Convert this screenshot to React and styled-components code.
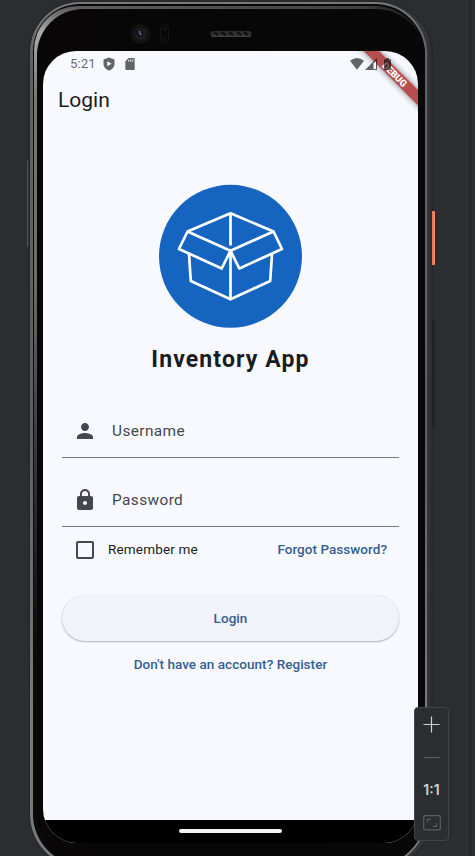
import React from "react";
import styled, { createGlobalStyle } from "styled-components";

const Global = createGlobalStyle`
  * { box-sizing: border-box; }
  html, body { margin: 0; padding: 0; background: #2c2d31; }
  body { font-family: Roboto, sans-serif; overflow: hidden; }
  svg { display: block; flex: none; }
  button { font-family: inherit; border: 0; padding: 0; background: none; }
`;

const Emulator = styled.main`
  position: relative;
  display: flex;
  width: 475px;
  height: 856px;
  overflow: hidden;
  background: linear-gradient(90deg, transparent 470px, #1f2023 470px, #1f2023 471px, transparent 471px), #2c2d31;
`;

const Shell = styled.div`
  flex: none;
  width: 402px;
  height: 867px;
  margin: 2px 0 0 30px;
  padding: 0 5px 1px 0;
  border-radius: 50px 54px 56px 56px;
  background: linear-gradient(90deg, #1d1e20 0, #252627 50%, #353637 99%, #292a2c 100%);
  box-shadow: 0 0 1px 1px #252629;
`;

const Rim = styled.div`
  height: 100%;
  padding: 2px 2px 2px 3px;
  border-radius: 50px 52px 54px 54px;
  background: linear-gradient(180deg, #77797a 0, #606366 60px, #5c6065 50%, #777b7d 82%, #77797a 100%);
`;

const Groove = styled.div`
  height: 100%;
  padding: 2px 0 0 1px;
  border-radius: 47px 50px 52px 52px;
  background: #080809;
`;

const Bevel = styled.div`
  height: 100%;
  padding: 3px 0 0 3px;
  border-radius: 44px 50px 52px 52px;
  background: linear-gradient(90deg, transparent 40px, rgba(8,8,9,.35) 330px, #080809 389px),
    linear-gradient(180deg, #5a5958 0, #aaa 26px, #777874 90px, #686b66 280px, #292a29 500px, #0b0b0c 650px);
`;

const Glass = styled.div`
  display: flex;
  flex-direction: column;
  height: 100%;
  padding: 0 0 0 6px;
  border-radius: 46px 49px 52px 52px;
  background: linear-gradient(90deg, #090708, #070708 50%, #080808);
`;

const SensorBar = styled.div`
  display: flex;
  align-items: center;
  height: 42px;
  padding: 8px 0 0 86px;
`;

const Screen = styled.section`
  position: relative;
  display: flex;
  flex-direction: column;
  width: 375px;
  height: 792px;
  overflow: hidden;
  border-radius: 33px 33px 34px 34px;
  background: #f8f9ff;
  color: #191c20;
`;

const StatusBar = styled.header`
  position: relative;
  z-index: 1;
  display: flex;
  align-items: center;
  height: 25px;
  padding: 0 27px 0 27px;
  color: rgba(0,0,0,.6);
`;

const Clock = styled.time`
  width: 33px;
  font-size: 13.3px;
  line-height: 25px;
`;

const StatusGroup = styled.div`
  display: flex;
  align-items: center;
  gap: ${(p) => p.$gap}px;
  margin-left: ${(p) => (p.$end ? "auto" : "0")};
`;

const AppBar = styled.h1`
  margin: 0;
  height: 48px;
  padding-left: 15px;
  font-size: 21px;
  font-weight: 400;
  line-height: 48px;
`;

const Form = styled.form`
  display: flex;
  flex-direction: column;
  flex: 1;
  padding: 60px 19px 0;
`;

const Logo = styled.svg`
  align-self: center;
`;

const Title = styled.h2`
  margin: 17px 0 0;
  font-size: 23px;
  line-height: 30px;
  font-weight: 700;
  letter-spacing: 1.12px;
  text-align: center;
`;

const Field = styled.label`
  display: flex;
  align-items: center;
  height: 54px;
  margin-top: ${(p) => p.$top}px;
  padding: 0 0 0 11px;
  gap: 15px;
  border-bottom: 1px solid #73777f;
  color: #43474e;
  font-size: 15.4px;
  letter-spacing: 0.4px;
`;

const Options = styled.div`
  display: flex;
  align-items: center;
  height: 44px;
  padding: 0 12px 0 14px;
`;

const Checkbox = styled.span`
  width: 18px;
  height: 18px;
  margin: 2px 14px 0 0;
  border: 2px solid #43474e;
  border-radius: 2px;
`;

const Remember = styled.span`
  font-size: 13.5px;
  letter-spacing: 0.17px;
`;

const TextButton = styled.button`
  margin: ${(p) => p.$margin};
  color: #35608f;
  font-size: 13.5px;
  font-weight: 500;
  line-height: 20px;
  letter-spacing: 0.04px;
  white-space: nowrap;
`;

const LoginButton = styled.button`
  height: 46px;
  margin: 24px 0 0;
  border-radius: 23px;
  background: #f1f2fa;
  box-shadow: 0 1px 2px rgba(0,0,0,.28), 0 0 1px rgba(0,0,0,.12);
  color: #35608f;
  font-size: 13.5px;
  font-weight: 500;
  letter-spacing: 0.04px;
`;

const NavBar = styled.footer`
  display: flex;
  justify-content: center;
  height: 23px;
  padding-top: 9px;
  background: #000;
`;

const NavHandle = styled.span`
  width: 103px;
  height: 4px;
  border-radius: 2px;
  background: #f4f4f4;
`;

const Ribbon = styled.div`
  position: absolute;
  top: 17.5px;
  left: 292px;
  width: 120px;
  height: 10.5px;
  transform: rotate(45deg);
  background: rgba(160,24,24,.76);
  box-shadow: 0 0 6px rgba(0,0,0,.5);
  color: #fff;
  font-size: 9.5px;
  font-weight: 900;
  line-height: 11px;
  text-align: center;
`;

const SideKey = styled.span`
  position: absolute;
  left: ${(p) => p.$x}px;
  top: ${(p) => p.$y}px;
  width: ${(p) => p.$w}px;
  height: ${(p) => p.$h}px;
  border-radius: 0 1px 1px 0;
  background: ${(p) => p.$fill};
`;

const ZoomPanel = styled.aside`
  position: absolute;
  left: 414px;
  top: 707px;
  display: flex;
  flex-direction: column;
  align-items: center;
  width: 35px;
  height: 134px;
  border: 1px solid #434446;
  border-radius: 4px;
  background: #2b2d30;
`;

const ZoomButton = styled.button`
  display: grid;
  place-items: center;
  width: 33px;
  height: 33px;
  padding-bottom: ${(p) => p.$lift || 0}px;
  color: #ced0d6;
  font: 600 14px Inter, sans-serif;
  letter-spacing: 0;
`;

const IconSpacer = styled.span`
  width: 5px;
`;

const Sensors = () => (
  <svg width="128" height="26" viewBox="0 0 128 26">
    <circle cx="11.5" cy="13" r="10" fill="#131314" />
    <circle cx="11.5" cy="13" r="6" fill="#1d1e20" />
    <circle cx="10.5" cy="12" r="3.6" fill="#11141d" />
    <circle cx="10.5" cy="11" r="1.5" fill="#40485d" />
    <circle cx="11.5" cy="13" r="0.9" fill="#858dad" />
    <rect x="31.5" y="3" width="8" height="19" rx="4" fill="#080808" stroke="#161617" />
    <circle cx="35.5" cy="7.5" r="2.5" fill="#101011" />
    <circle cx="35.5" cy="17.5" r="2.5" fill="#101011" />
    <rect x="81.5" y="10" width="41" height="6" rx="3" fill="#303030" />
    <path d="M85 11l4 3m3-3l5 3m3-3l4 3m4-3l4 3m3-3l4 3" stroke="#111" strokeWidth="2.2" />
    <path d="M83 15.4h39" stroke="#464646" />
  </svg>
);

const Shield = () => (
  <svg width="12" height="14" viewBox="0 0 12 14">
    <path d="M6 .5L.5 2.6v4.1C.5 9.8 2.8 12.6 6 13.5c3.2-.9 5.5-3.7 5.5-6.8V2.6z" fill="currentColor" />
    <path d="M4.2 4.2v5L8.6 6.7z" fill="#f8f9ff" />
  </svg>
);

const SdCard = () => (
  <svg width="10" height="12" viewBox="0 0 10 12">
    <path d="M3.5 0H8.6Q9.7 0 9.7 1.1v9.8Q9.7 12 8.6 12H1.4Q.3 12 .3 10.9V3.4z" fill="currentColor" />
    <path d="M3.7 1.6v2M5.7 1.6v2M7.7 1.6v2" stroke="#f8f9ff" />
  </svg>
);

const Wifi = () => (
  <svg width="14" height="12" viewBox="0 0 14 12">
    <path d="M0 2.7Q7-2.7 14 2.7L7 11.8z" fill="currentColor" />
  </svg>
);

const Signal = () => (
  <svg width="12" height="12" viewBox="0 0 12 12">
    <path d="M0 12L12 0v12z" fill="currentColor" />
    <path d="M8.5 5.4l2.5-2.5V11H8.5z" fill="#f8f9ff" />
  </svg>
);

const Battery = () => (
  <svg width="7" height="12" viewBox="0 0 7 12">
    <path d="M2 0h3v1.2h1q1 0 1 1v8.8q0 1-1 1H1q-1 0-1-1V2.2q0-1 1-1h1z" fill="currentColor" />
  </svg>
);

const BoxLogo = () => (
  <Logo width="144" height="144" viewBox="0.5 0 144 144">
    <circle cx="72" cy="72.3" r="71.5" fill="#1565c0" />
    <g fill="none" stroke="#fff" strokeWidth="2.7" strokeLinejoin="round">
      <path d="M29 47.5L72 29.3L115 47.5L72 66.7z" />
      <path d="M72 29.3V61.5M72 68V115.3" />
      <path d="M29 47.5L20.5 65L63.2 84.5L72 66.7" />
      <path d="M115 47.5L123.5 65L80.8 84.5L72 66.7" />
      <path d="M30.5 70L32.3 97L72 115.3L111.7 97L113.5 70" />
    </g>
  </Logo>
);

const Person = () => (
  <svg width="24" height="24" viewBox="0 0 24 24" fill="currentColor">
    <path d="M12 12c2.21 0 4-1.79 4-4s-1.79-4-4-4-4 1.79-4 4 1.79 4 4 4zm0 2c-2.67 0-8 1.34-8 4v2h16v-2c0-2.66-5.33-4-8-4z" />
  </svg>
);

const Lock = () => (
  <svg width="24" height="24" viewBox="0 0 24 24" fill="currentColor">
    <path d="M18 8h-1V6c0-2.76-2.24-5-5-5S7 3.24 7 6v2H6c-1.1 0-2 .9-2 2v10c0 1.1.9 2 2 2h12c1.1 0 2-.9 2-2V10c0-1.1-.9-2-2-2zm-6 9c-1.1 0-2-.9-2-2s.9-2 2-2 2 .9 2 2-.9 2-2 2zm3.1-9H8.9V6c0-1.71 1.39-3.1 3.1-3.1s3.1 1.39 3.1 3.1v2z" />
  </svg>
);

export default function App() {
  return (
    <>
      <Global />
      <Emulator>
        <Shell>
          <Rim>
            <Groove>
              <Bevel>
                <Glass>
                  <SensorBar><Sensors /></SensorBar>
                  <Screen>
                    <StatusBar>
                      <Clock>5:21</Clock>
                      <StatusGroup $gap={10}><Shield /><SdCard /></StatusGroup>
                      <StatusGroup $end $gap={1}><Wifi /><Signal /><IconSpacer /><Battery /></StatusGroup>
                    </StatusBar>
                    <AppBar>Login</AppBar>
                    <Form>
                      <BoxLogo />
                      <Title>Inventory App</Title>
                      <Field $top={29}><Person />Username</Field>
                      <Field $top={15}><Lock />Password</Field>
                      <Options>
                        <Checkbox role="checkbox" aria-checked="false" />
                        <Remember>Remember me</Remember>
                        <TextButton type="button" $margin="0 0 0 auto">Forgot Password?</TextButton>
                      </Options>
                      <LoginButton type="button">Login</LoginButton>
                      <TextButton type="button" $margin="13px 0 0">Don't have an account? Register</TextButton>
                    </Form>
                    <NavBar><NavHandle /></NavBar>
                    <Ribbon>DEBUG</Ribbon>
                  </Screen>
                </Glass>
              </Bevel>
            </Groove>
          </Rim>
        </Shell>
        <SideKey $x={27} $y={160} $w={1} $h={87} $fill="#55575a" />
        <SideKey $x={432} $y={211} $w={3} $h={54} $fill="linear-gradient(90deg, #e96f50, #f88d70)" />
        <SideKey $x={432} $y={320} $w={3} $h={107} $fill="linear-gradient(90deg, #151617, #29292a, #17181a)" />
        <ZoomPanel>
          <ZoomButton aria-label="Zoom in">
            <svg width="17" height="17" viewBox="0 0 17 17" stroke="currentColor" strokeWidth="1.2"><path d="M8.5 .5v16M.5 8.5h16" /></svg>
          </ZoomButton>
          <ZoomButton aria-label="Zoom out">
            <svg width="17" height="17" viewBox="0 0 17 17" stroke="#5d5e61" strokeWidth="1.2"><path d="M.5 8.5h16" /></svg>
          </ZoomButton>
          <ZoomButton $lift={2}>1:1</ZoomButton>
          <ZoomButton $lift={1} aria-label="Fit to window">
            <svg width="18" height="16" viewBox="0 0 18 16" fill="none" stroke="#5d5e61" strokeWidth="1.2">
              <rect x=".7" y=".7" width="16.6" height="14.2" rx="2" />
              <path d="M4.5 7.3V4.3H8M13.5 8v3.3H10" />
            </svg>
          </ZoomButton>
        </ZoomPanel>
      </Emulator>
    </>
  );
}
